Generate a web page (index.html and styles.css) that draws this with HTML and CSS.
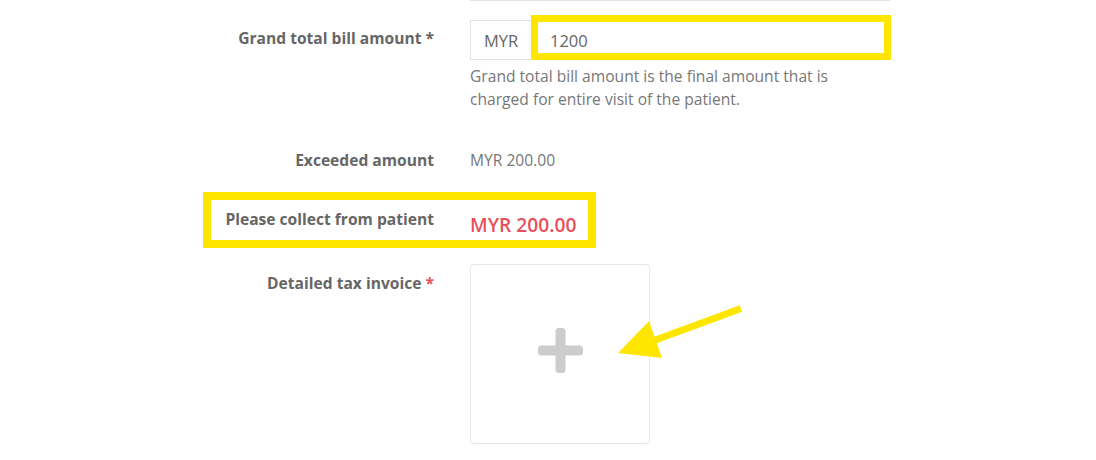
FILE: index.html
```html
<!DOCTYPE html>
<html lang="en">
<head>
<meta charset="utf-8">
<title>Bill form</title>
<link rel="stylesheet" href="styles.css">
</head>
<body>
<div class="page">
  <div class="form">
    <div class="row row-prev">
      <div></div>
      <div class="prev-line"></div>
    </div>

    <div class="row row-total">
      <div class="label label-total">Grand total bill amount *</div>
      <div class="field">
        <div class="input-group">
          <span class="addon">MYR</span>
          <span class="input">1200</span>
        </div>
        <p class="help">Grand total bill amount is the final amount that is charged for entire visit of the patient.</p>
      </div>
    </div>

    <div class="row row-exceeded">
      <div class="label">Exceeded amount</div>
      <div class="value">MYR 200.00</div>
    </div>

    <div class="row row-collect">
      <div class="label">Please collect from patient</div>
      <div class="value value-red">MYR 200.00</div>
    </div>

    <div class="row row-invoice">
      <div class="label label-invoice">Detailed tax invoice <span class="req">*</span></div>
      <div class="upload">
        <svg class="plus" width="45" height="45" viewBox="0 0 45 45" aria-hidden="true">
          <rect x="17.5" y="0" width="10" height="45" rx="3.5" fill="#cccccc"/>
          <rect x="0" y="17.5" width="45" height="10" rx="3.5" fill="#cccccc"/>
        </svg>
      </div>
    </div>
  </div>

  <div class="hl hl-input"></div>
  <div class="hl hl-collect"></div>
  <svg class="arrow" width="1096" height="460" viewBox="0 0 1096 460" aria-hidden="true">
    <line x1="741" y1="308.5" x2="650" y2="342" stroke="#ffe600" stroke-width="7"/>
    <polygon points="618,353 649,321 662,358" fill="#ffe600"/>
  </svg>
</div>
</body>
</html>
```

FILE: styles.css
```css
html, body {
  margin: 0;
  padding: 0;
  background: #ffffff;
}

body {
  width: 1096px;
  height: 460px;
  overflow: hidden;
  font-family: "Open Sans", "Liberation Sans", sans-serif;
  color: #666666;
}

.page {
  position: relative;
  width: 1096px;
  height: 460px;
}

.form {
  display: flex;
  flex-direction: column;
}

.row {
  display: grid;
  grid-template-columns: 434px 420px;
  column-gap: 36px;
}

.label {
  text-align: right;
  font-weight: 700;
  font-size: 15.6px;
  line-height: 22px;
  color: #666666;
}

.prev-line {
  height: 1px;
  background: #e3e3e3;
}

.row-total {
  margin-top: 14px;
}

.label-total {
  padding-top: 12px;
}

.input-group {
  display: flex;
  align-items: flex-end;
  height: 45px;
}

.addon {
  box-sizing: border-box;
  width: 61px;
  height: 40px;
  border: 1px solid #e3e3e3;
  border-right: none;
  display: flex;
  align-items: center;
  justify-content: center;
  font-size: 16.5px;
  color: #666666;
}

.input {
  box-sizing: border-box;
  flex: 1;
  height: 40px;
  border: 1px solid #e3e3e3;
  padding-left: 18px;
  display: flex;
  align-items: center;
  font-size: 16.5px;
  color: #666666;
}

.help {
  margin: 5px 0 0;
  font-size: 15.6px;
  line-height: 23px;
  color: #777777;
  width: 390px;
}

.row-exceeded {
  margin-top: 38px;
}

.value {
  font-size: 15.6px;
  line-height: 22px;
  color: #777777;
}

.row-collect {
  margin-top: 37px;
}

.value-red {
  padding-top: 4px;
  font-size: 19.2px;
  line-height: 26px;
  font-weight: 600;
  color: #e8505b;
}

.row-invoice {
  margin-top: 26px;
}

.label-invoice {
  padding-top: 8px;
}

.req {
  color: #e8505b;
}

.upload {
  box-sizing: border-box;
  width: 180px;
  height: 180px;
  border: 1px solid #e6e6e6;
  border-radius: 4px;
  display: flex;
  align-items: center;
  justify-content: center;
  padding-bottom: 8px;
}

.hl {
  position: absolute;
  box-sizing: border-box;
  border: 7px solid #ffe600;
  pointer-events: none;
}

.hl-input {
  left: 531px;
  top: 15px;
  width: 360px;
  height: 45px;
}

.hl-collect {
  left: 203px;
  top: 192px;
  width: 393px;
  height: 56px;
  border-width: 8px;
}

.arrow {
  position: absolute;
  left: 0;
  top: 0;
  pointer-events: none;
}
```
